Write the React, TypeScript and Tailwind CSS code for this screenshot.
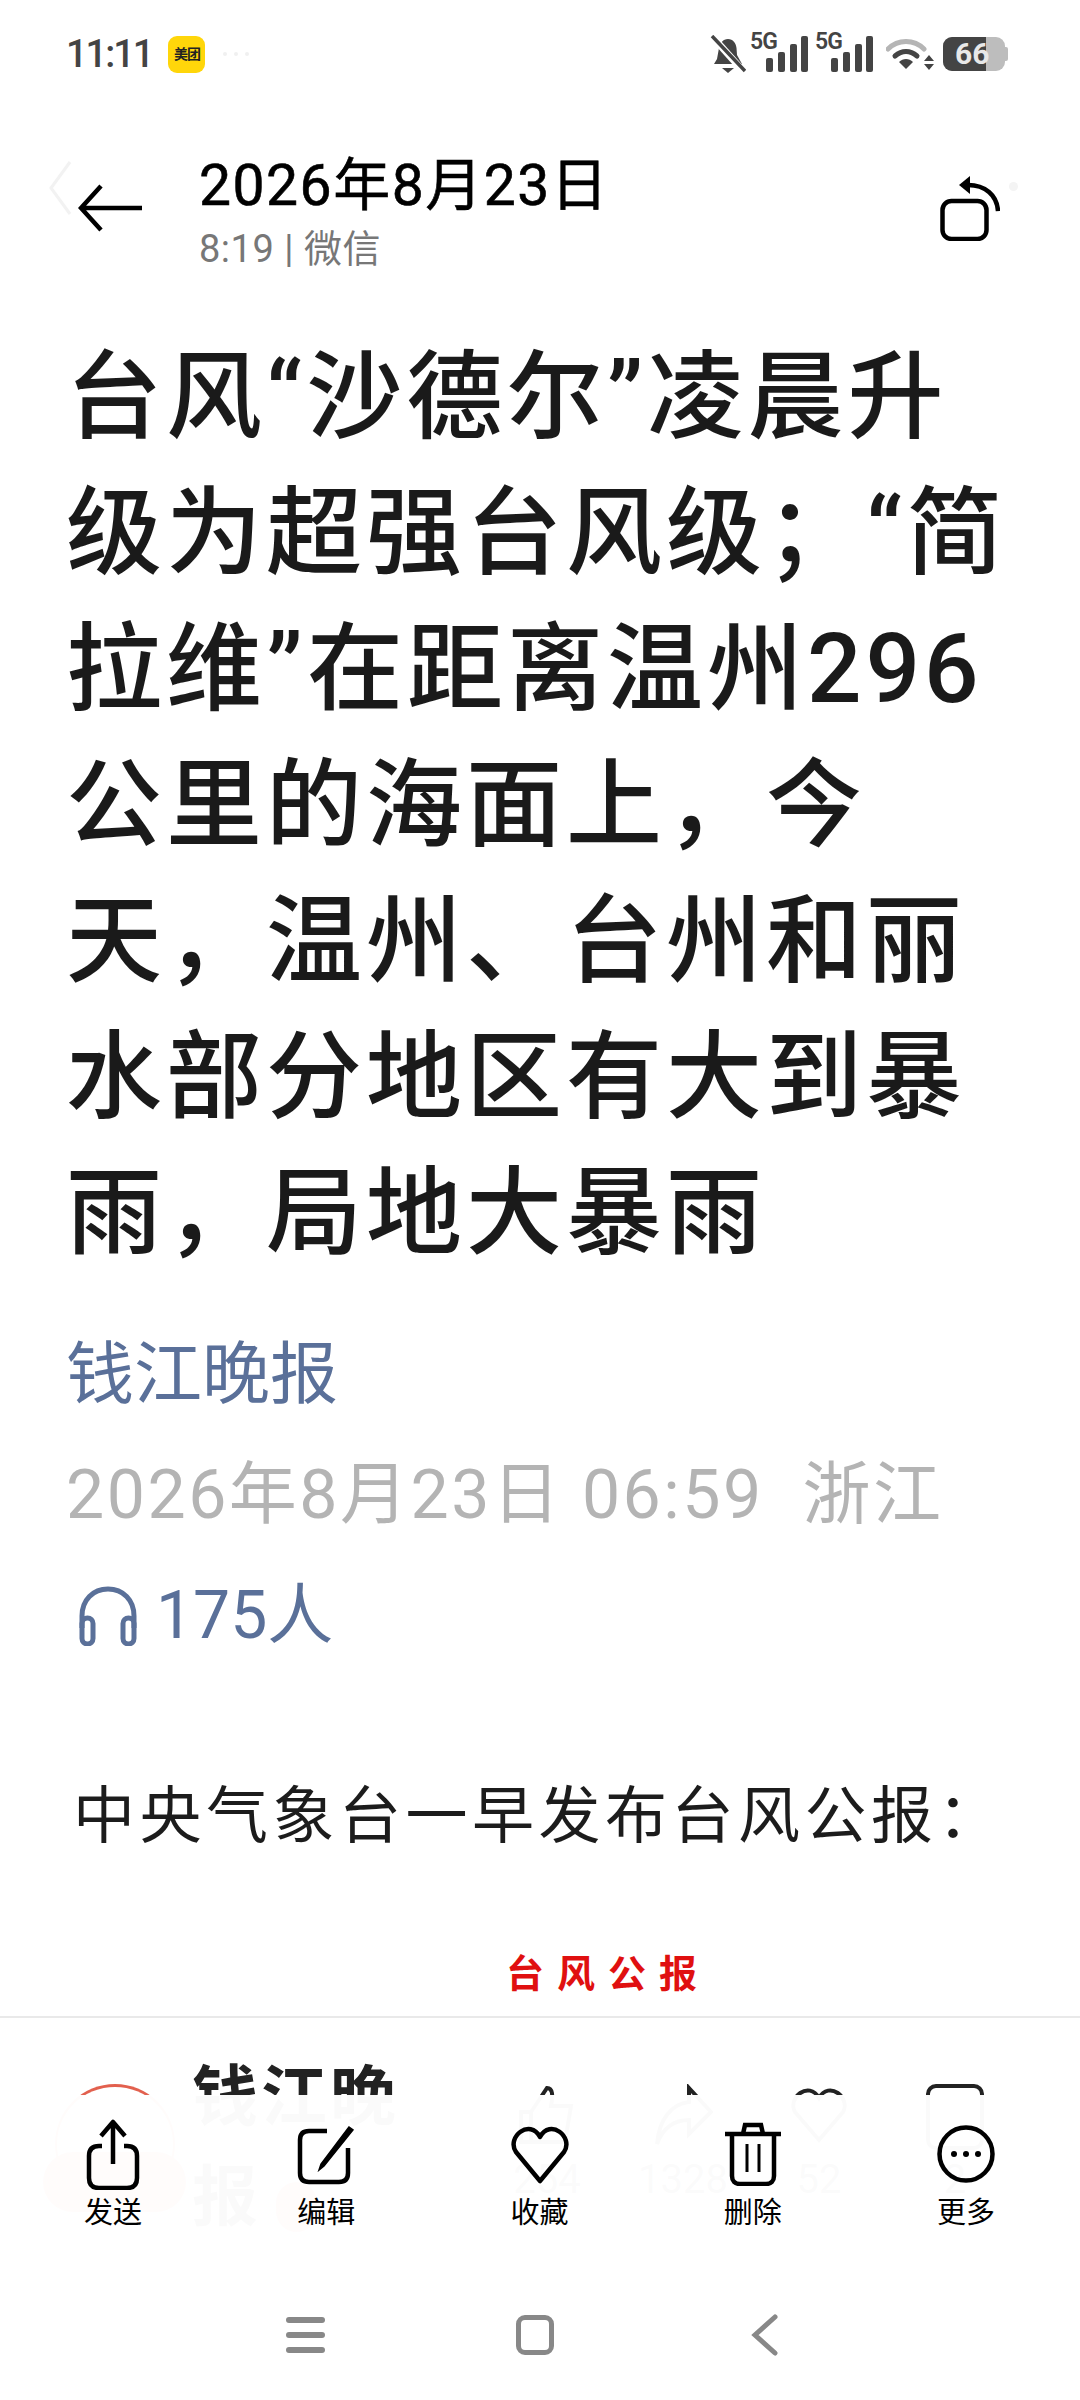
const titleLines = [
  "台风“沙德尔”凌晨升",
  "级为超强台风级；“简",
  "拉维”在距离温州296",
  "公里的海面上，今",
  "天，温州、台州和丽",
  "水部分地区有大到暴",
  "雨，局地大暴雨",
];

const font = "font-['Roboto','Noto_Sans_CJK_SC',sans-serif]";

function StatusBars() {
  return (
    <div className="relative w-[58px] h-[40px]">
      <span className="absolute left-0 top-[-4px] text-[23px] leading-[24px] font-semibold text-[#444] tracking-[-1px]">5G</span>
      <svg viewBox="0 0 58 40" className="absolute inset-0 w-[58px] h-[40px]" fill="#444">
        <rect x="16" y="24" width="7" height="14" rx="2" />
        <rect x="28" y="18" width="7" height="20" rx="2" />
        <rect x="40" y="10" width="7" height="28" rx="2" />
        <rect x="51" y="2" width="7" height="36" rx="2" />
      </svg>
    </div>
  );
}

function StatusBar() {
  return (
    <div className="h-[108px] flex items-center pl-[66px] pr-[72px] text-[#444]">
      <span className="text-[38px] font-medium leading-none tracking-[-2px]">11:11</span>
      <div className="ml-[16px] w-[37px] h-[37px] rounded-[9px] bg-[#ffd60a] flex items-center justify-center text-[14px] font-bold text-[#222] leading-none tracking-[-1px]">
        美团
      </div>
      <div className="ml-[18px] flex gap-[7px]">
        <span className="w-[4px] h-[4px] rounded-full bg-[#f0f0f0]" />
        <span className="w-[4px] h-[4px] rounded-full bg-[#f0f0f0]" />
        <span className="w-[4px] h-[4px] rounded-full bg-[#f0f0f0]" />
      </div>
      <div className="ml-auto flex items-center">
        <svg viewBox="0 0 36 38" className="w-[36px] h-[38px]" fill="#444">
          <path d="M18 4c5 0 8 4 8.500 9l.5 7 5 9H4l3-5 2-11c1-5 4-9 9-9z" />
          <path d="M12 33h12l-6 5z" />
          <path d="M1 0 34 37" stroke="#fff" strokeWidth="7" />
          <path d="M2 1 35 36" stroke="#444" strokeWidth="3.500" />
        </svg>
        <div className="ml-[4px] flex gap-[7px]">
          <StatusBars />
          <StatusBars />
        </div>
        <svg viewBox="0 0 48 34" className="ml-[13px] w-[48px] h-[34px]">
          <path d="M2 12c10-10 26-10 36 0" fill="none" stroke="#b5b5b5" strokeWidth="5" strokeLinecap="round" />
          <path d="M9 19c7-6 15-6 22 0" fill="none" stroke="#444" strokeWidth="5" strokeLinecap="round" />
          <path d="M13 25c4-4 10-4 14 0l-7 7z" fill="#444" />
          <path d="M43 18l5 6h-10zM43 33l5-6h-10z" fill="#444" />
        </svg>
        <div className="ml-[9px] relative w-[62px] h-[34px] rounded-[9px] bg-[#bdbdbd]">
          <div className="absolute left-0 top-0 bottom-0 w-[43px] rounded-l-[9px] bg-[#444]" />
          <span className="absolute left-[12px] top-0 text-[30px] leading-[34px] font-bold text-[#e8e8e8]">66</span>
        </div>
        <div className="w-[3px] h-[14px] rounded-r-[2px] bg-[#bdbdbd]" />
      </div>
    </div>
  );
}

function Header() {
  return (
    <div className="relative h-[219px] flex pl-[78px] pr-[80px]">
      <svg viewBox="0 0 25 56" className="absolute left-[48px] top-[52px] w-[25px] h-[56px]" fill="none" stroke="#f2f2f2" strokeWidth="3">
        <path d="M22 2 3 28l19 26" />
      </svg>
      <svg viewBox="0 0 64 48" className="mt-[76px] w-[64px] h-[48px]" fill="none" stroke="#000" strokeWidth="4.500">
        <path d="M23 2 3 24l20 22M3 24h61" />
      </svg>
      <div className="ml-[57px] mt-[46px]">
        <div className="text-[57px] leading-[64px] font-normal text-black tracking-[1.500px] [-webkit-text-stroke:0.6px_#000]">2026年8月23日</div>
        <div className="mt-[8px] text-[38px] leading-[46px] text-[#777] tracking-[0.5px]">8:19 | 微信</div>
      </div>
      <svg viewBox="0 0 60 66" className="ml-auto mt-[67px] w-[60px] h-[66px]" fill="none" stroke="#000" strokeWidth="4.500">
        <rect x="2.500" y="26" width="44" height="38" rx="9" />
        <path d="M28 10C45 10 57 20 58 36" />
        <path d="M30 1 19 10l11 9z" fill="#000" stroke="none" />
      </svg>
      <div className="absolute right-[62px] top-[74px] w-[9px] h-[9px] rounded-full bg-[#f4f4f4]" />
    </div>
  );
}

function Article() {
  return (
    <div className="flex-1 pl-[66px] pt-[2px] overflow-hidden">
      <h1 className="text-[96px] leading-[136px] font-medium tracking-[4px] text-[#1a1a1a] whitespace-nowrap">
        {titleLines.map((line) => (
          <div key={line}>{line}</div>
        ))}
      </h1>
      <div className="mt-[49px] text-[68px] leading-[90px] text-[#5a7099]">钱江晚报</div>
      <div className="mt-[30px] text-[68px] leading-[90px] text-[#b4b4b4] tracking-[2.500px] whitespace-pre">2026年8月23日 06:59  浙江</div>
      <div className="mt-[31px] flex items-center text-[#5a7099]">
        <svg viewBox="0 0 60 60" className="ml-[12px] w-[60px] h-[60px]" fill="none" stroke="#5a7099" strokeWidth="5">
          <path d="M4 42V30C4 14 15 3 30 3s26 11 26 27v12" />
          <rect x="4" y="32" width="11" height="26" rx="5.500" />
          <rect x="45" y="32" width="11" height="26" rx="5.500" />
        </svg>
        <span className="ml-[18px] text-[66px] leading-[90px]">175人</span>
      </div>
      <div className="mt-[114px] ml-[7px] text-[62px] leading-[84px] tracking-[4.500px] text-[#1c1c1c] whitespace-nowrap">
        中央气象台一早发布台风公报：
      </div>
      <div className="mt-[91px] ml-[440px] text-[38px] leading-[48px] font-bold tracking-[13px] text-[#e01010] whitespace-nowrap">
        台风公报
      </div>
    </div>
  );
}

function CommentBar() {
  return (
    <div className="relative h-[384px] border-t-[2px] border-[#e9e9e9] flex pt-[30px] pl-[55px] text-[#222]">
      <div className="relative mt-[36px] w-[120px] h-[120px] rounded-full border-t-[3px] border-[#e2604e] border-x-[2px]" />
      <div className="absolute left-[43px] top-[134px] w-[143px] h-[60px] rounded-full bg-[#e2604e]" />
      <div className="absolute left-[276px] top-[164px] w-[41px] h-[50px] rounded-full bg-[#e2604e]" />
      <div className="ml-[17px] w-[213px] text-[66px] leading-[100px] font-bold tracking-[3px]">
        钱江晚<br />报
      </div>
      <div className="ml-[112px] flex gap-[76px] mt-[36px] text-[40px] text-[#333]">
        <div className="w-[60px] flex flex-col items-center">
          <svg viewBox="0 0 60 64" className="w-[60px] h-[64px]" fill="none" stroke="#222" strokeWidth="4">
            <path d="M4 28h10v30H4zM14 28 30 4c6 0 6 8 4 18h20l-6 36H14" />
          </svg>
          <span className="mt-[2px]">254</span>
        </div>
        <div className="w-[60px] flex flex-col items-center">
          <svg viewBox="0 0 60 64" className="w-[60px] h-[64px]" fill="none" stroke="#222" strokeWidth="4">
            <path d="M36 4 58 28 36 50V36C20 36 10 44 4 60 6 36 18 20 36 18z" />
          </svg>
          <span className="mt-[2px]">1328</span>
        </div>
        <div className="w-[60px] flex flex-col items-center">
          <svg viewBox="0 0 60 60" className="w-[60px] h-[60px]" fill="none" stroke="#222" strokeWidth="4">
            <path d="M30 56 6 28C-2 14 20-4 30 14 40-4 62 14 54 28z" />
          </svg>
          <span className="mt-[6px]">52</span>
        </div>
        <div className="w-[60px] flex flex-col items-center">
          <div className="w-[58px] h-[66px] rounded-[10px] border-[4px] border-[#222]" />
          <span>2</span>
        </div>
      </div>
      <div className="absolute left-0 right-0 top-[77px] bottom-0 bg-white/[0.98]" />
    </div>
  );
}

const tools = [
  {
    label: "发送",
    icon: (
      <svg viewBox="0 0 56 72" className="w-[56px] h-[72px]" fill="none" stroke="#000" strokeWidth="4.500" strokeLinejoin="round">
        <path d="M28 46V4M16 18 28 4l12 14" />
        <path d="M17 28h-3C7 28 4 32 4 38v22c0 6 3 10 10 10h28c7 0 10-4 10-10V38c0-6-3-10-10-10h-3" />
      </svg>
    ),
  },
  {
    label: "编辑",
    icon: (
      <svg viewBox="0 0 58 72" className="w-[58px] h-[72px]" fill="none" stroke="#000" strokeWidth="4.500">
        <path d="M30 13H12c-6 0-9 3-9 9v33c0 6 3 9 9 9h30c6 0 9-3 9-9V30" />
        <path d="M52 9 24 46l-2 6 5-4L56 12z" fill="#000" strokeWidth="1.500" />
      </svg>
    ),
  },
  {
    label: "收藏",
    icon: (
      <svg viewBox="0 0 62 60" className="w-[62px] h-[60px]" fill="none" stroke="#000" strokeWidth="4.500" strokeLinejoin="round">
        <path d="M31 57 7 28C-3 13 21-6 31 13 41-6 65 13 55 28z" />
      </svg>
    ),
  },
  {
    label: "删除",
    icon: (
      <svg viewBox="0 0 56 64" className="w-[56px] h-[64px]" fill="none" stroke="#000" strokeWidth="4.500">
        <path d="M0 12h56" />
        <path d="M18 12l2-9h16l2 9" />
        <path d="M7 12v42c0 5 3 8 8 8h26c5 0 8-3 8-8V12" />
        <path d="M22 22v28M34 22v28" strokeWidth="3" />
      </svg>
    ),
  },
  {
    label: "更多",
    icon: (
      <svg viewBox="0 0 58 58" className="w-[58px] h-[58px]" fill="none" stroke="#000" strokeWidth="4.500">
        <circle cx="29" cy="29" r="26.500" />
        <circle cx="17" cy="29" r="3" fill="#000" stroke="none" />
        <circle cx="29" cy="29" r="3" fill="#000" stroke="none" />
        <circle cx="41" cy="29" r="3" fill="#000" stroke="none" />
      </svg>
    ),
  },
];

function Toolbar() {
  return (
    <div className="absolute left-[43px] right-[44px] top-[2118px] flex justify-between">
      {tools.map((tool) => (
        <div key={tool.label} className="w-[140px] flex flex-col items-center">
          <div className="h-[72px] flex items-center justify-center">{tool.icon}</div>
          <span className="mt-[4px] text-[29px] leading-[38px] text-black">{tool.label}</span>
        </div>
      ))}
    </div>
  );
}

function NavBar() {
  return (
    <div className="absolute left-0 right-0 top-[2312px] h-[46px] flex items-center">
      <div className="ml-[286px] w-[39px] flex flex-col gap-[9px]">
        <span className="h-[6px] rounded-full bg-[#888]" />
        <span className="h-[6px] rounded-full bg-[#888]" />
        <span className="h-[6px] rounded-full bg-[#888]" />
      </div>
      <div className="ml-[191px] w-[38px] h-[40px] rounded-[9px] border-[5px] border-[#888]" />
      <svg viewBox="0 0 27 42" className="ml-[197px] w-[27px] h-[42px]" fill="none" stroke="#888" strokeWidth="5" strokeLinecap="round">
        <path d="M24 3 4 21l20 18" />
      </svg>
    </div>
  );
}

export default function App() {
  return (
    <div className={`relative w-[1080px] h-[2400px] bg-white overflow-hidden flex flex-col ${font}`}>
      <StatusBar />
      <Header />
      <Article />
      <CommentBar />
      <Toolbar />
      <NavBar />
    </div>
  );
}
